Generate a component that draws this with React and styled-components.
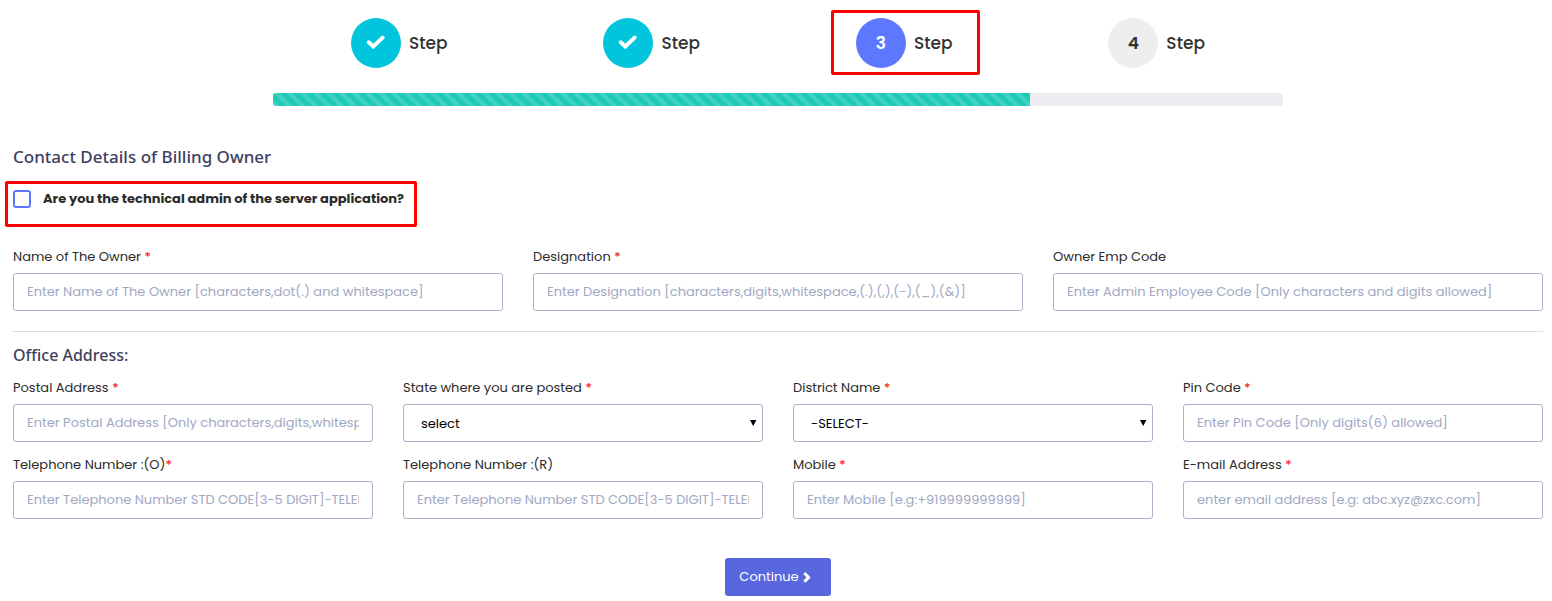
import React from "react";
import styled, { createGlobalStyle, css } from "styled-components";

const GlobalStyle = createGlobalStyle`
  *, *::before, *::after { box-sizing: border-box; }
  body {
    margin: 0;
    background: #fff;
    color: #212529;
    font: 400 13px/20px Poppins, Inter, "Liberation Sans", sans-serif;
  }
`;

const Page = styled.main`
  padding: 18px 9px 5px 13px;
`;

const Wizard = styled.header`
  width: 66%;
  margin: 0 auto;
`;

const Steps = styled.ol`
  display: grid;
  grid-template-columns: repeat(4, 1fr);
  justify-items: center;
  margin: 0 0 25px;
  padding: 0;
  list-style: none;
`;

const highlight = css`
  &::after {
    content: "";
    position: absolute;
    inset: ${(p) => p.$inset};
    border: 3px solid #fe0000;
    border-radius: 2px;
    pointer-events: none;
  }
`;

const Step = styled.li`
  position: relative;
  display: flex;
  align-items: center;
  gap: 8px;
  ${(p) => p.$inset && highlight}
`;

const circleColors = {
  done: ["#00c5dc", "#fff"],
  current: ["#5d78ff", "#fff"],
  pending: ["#eeeeee", "#333"],
};

const StepCircle = styled.span`
  display: flex;
  align-items: center;
  justify-content: center;
  width: 50px;
  height: 50px;
  border-radius: 50%;
  background: ${(p) => circleColors[p.$state][0]};
  color: ${(p) => circleColors[p.$state][1]};
  font-size: 17px;
  font-weight: 600;
`;

const StepLabel = styled.span`
  color: #333;
  font-size: 17px;
  font-weight: 500;
`;

const Progress = styled.div`
  height: 13px;
  overflow: hidden;
  border-radius: 3px;
  background: #ebedf2;
`;

const ProgressBar = styled.div`
  width: 75%;
  height: 100%;
  background: #1dc9b7
    linear-gradient(45deg, rgba(255, 255, 255, 0.15) 25%, transparent 25%, transparent 50%,
      rgba(255, 255, 255, 0.15) 50%, rgba(255, 255, 255, 0.15) 75%, transparent 75%, transparent)
    0 0 / 13px 13px;
`;

const Heading = styled.h2`
  margin: ${(p) => p.$margin};
  color: #3f4060;
  font: 500 17px/24px "Segoe UI", "Noto Sans", sans-serif;
`;

const SubHeading = styled.h3`
  margin: 0 0 11px;
  color: #3f4060;
  font: 500 16px/24px "Segoe UI", "Noto Sans", sans-serif;
`;

const AdminCheck = styled.label`
  position: relative;
  display: flex;
  align-items: flex-start;
  gap: 12px;
  width: fit-content;
  margin-bottom: 38px;
  color: #2b2b2b;
  font-weight: 700;
  ${highlight}
`;

const Checkbox = styled.input`
  appearance: none;
  width: 18px;
  height: 18px;
  margin: 1px 0 0;
  border: 2px solid #5d78ff;
  border-radius: 3px;
  background: #fff;
  &:checked { background: #5d78ff; box-shadow: inset 0 0 0 2px #fff; }
`;

const Grid = styled.div`
  display: grid;
  grid-template-columns: repeat(${(p) => p.$columns}, minmax(0, 1fr));
  gap: 13px 30px;
`;

const FieldBox = styled.div`
  display: flex;
  flex-direction: column;
  gap: 6px;
`;

const FieldLabel = styled.label`
  color: #2b2b2b;
`;

const Required = styled.span`
  color: #f00;
`;

const control = css`
  width: 100%;
  height: 38px;
  border: 1px solid #adb0c6;
  border-radius: 3px;
  background: #fff;
  font: inherit;
`;

const Input = styled.input`
  ${control}
  padding: 0 13px;
  &::placeholder { color: #a1a8c3; opacity: 1; }
`;

const SelectBox = styled.div`
  position: relative;
`;

const Select = styled.select`
  ${control}
  display: block;
  appearance: none;
  padding: 2px 17px 0;
  color: #000;
`;

const Arrow = styled.svg`
  position: absolute;
  top: 16px;
  right: 6px;
  pointer-events: none;
`;

const Divider = styled.hr`
  margin: 20px 0 11px;
  border: 0;
  border-top: 1px solid #dcdcdf;
`;

const Actions = styled.div`
  display: flex;
  justify-content: center;
  margin-top: 39px;
`;

const Button = styled.button`
  display: flex;
  align-items: center;
  gap: 4px;
  height: 38px;
  padding: 0 20px 0 14px;
  border: 0;
  border-radius: 3px;
  background: #5867dd;
  color: #fff;
  font: inherit;
`;

const Check = () => (
  <svg width="20" height="16" viewBox="0 0 20 16" fill="none" stroke="currentColor" strokeWidth="4" aria-hidden="true">
    <path d="M2.8 7.3 L7.3 11.4 L16.6 2.6" strokeLinecap="round" />
  </svg>
);

const Chevron = () => (
  <svg width="8" height="12" viewBox="0 0 8 12" fill="none" stroke="currentColor" strokeWidth="3" aria-hidden="true">
    <path d="M1.4 2 L5.6 6.4 L1.4 10.8" />
  </svg>
);

function Field({ id, label, required, tight, placeholder, options, type = "text" }) {
  return (
    <FieldBox>
      <FieldLabel htmlFor={id}>
        {label}
        {required && !tight && " "}
        {required && <Required>*</Required>}
      </FieldLabel>
      {options ? (
        <SelectBox>
          <Select id={id}>
            {options.map((o) => <option key={o}>{o}</option>)}
          </Select>
          <Arrow width="7" height="6" viewBox="0 0 7 6" aria-hidden="true">
            <path d="M0 0H6.4L3.2 6Z" fill="#000" />
          </Arrow>
        </SelectBox>
      ) : (
        <Input id={id} type={type} placeholder={placeholder} />
      )}
    </FieldBox>
  );
}

const steps = [
  { state: "done" },
  { state: "done" },
  { state: "current", inset: "-8px -27px -7px -25px" },
  { state: "pending" },
];

const ownerFields = [
  { id: "owner", label: "Name of The Owner", required: true, placeholder: "Enter Name of The Owner [characters,dot(.) and whitespace]" },
  { id: "designation", label: "Designation", required: true, placeholder: "Enter Designation [characters,digits,whitespace,(.),(,),(-),(_),(&)]" },
  { id: "empcode", label: "Owner Emp Code", placeholder: "Enter Admin Employee Code [Only characters and digits allowed]" },
];

const telHint = "Enter Telephone Number STD CODE[3-5 DIGIT]-TELEPHONE";

const addressFields = [
  { id: "postal", label: "Postal Address", required: true, placeholder: "Enter Postal Address [Only characters,digits,whitespace]" },
  { id: "state", label: "State where you are posted", required: true, options: ["select"] },
  { id: "district", label: "District Name", required: true, options: ["-SELECT-"] },
  { id: "pin", label: "Pin Code", required: true, placeholder: "Enter Pin Code [Only digits(6) allowed]" },
  { id: "telo", label: "Telephone Number :(O)", required: true, tight: true, type: "tel", placeholder: telHint },
  { id: "telr", label: "Telephone Number :(R)", type: "tel", placeholder: telHint },
  { id: "mobile", label: "Mobile", required: true, type: "tel", placeholder: "Enter Mobile [e.g:+919999999999]" },
  { id: "email", label: "E-mail Address", required: true, type: "email", placeholder: "enter email address [e.g: abc.xyz@zxc.com]" },
];

export default function App() {
  return (
    <Page>
      <GlobalStyle />
      <Wizard>
        <Steps>
          {steps.map((s, i) => (
            <Step key={i} $inset={s.inset}>
              <StepCircle $state={s.state}>{s.state === "done" ? <Check /> : i + 1}</StepCircle>
              <StepLabel>Step</StepLabel>
            </Step>
          ))}
        </Steps>
        <Progress role="progressbar" aria-valuenow={75} aria-valuemin={0} aria-valuemax={100}>
          <ProgressBar />
        </Progress>
      </Wizard>
      <form onSubmit={(e) => e.preventDefault()}>
        <Heading $margin="39px 0 20px">Contact Details of Billing Owner</Heading>
        <AdminCheck $inset="-8px -13px -18px -8px">
          <Checkbox type="checkbox" />
          Are you the technical admin of the server application?
        </AdminCheck>
        <Grid $columns={3}>
          {ownerFields.map((f) => <Field key={f.id} {...f} />)}
        </Grid>
        <Divider />
        <SubHeading>Office Address:</SubHeading>
        <Grid $columns={4}>
          {addressFields.map((f) => <Field key={f.id} {...f} />)}
        </Grid>
        <Actions>
          <Button type="submit">Continue <Chevron /></Button>
        </Actions>
      </form>
    </Page>
  );
}
